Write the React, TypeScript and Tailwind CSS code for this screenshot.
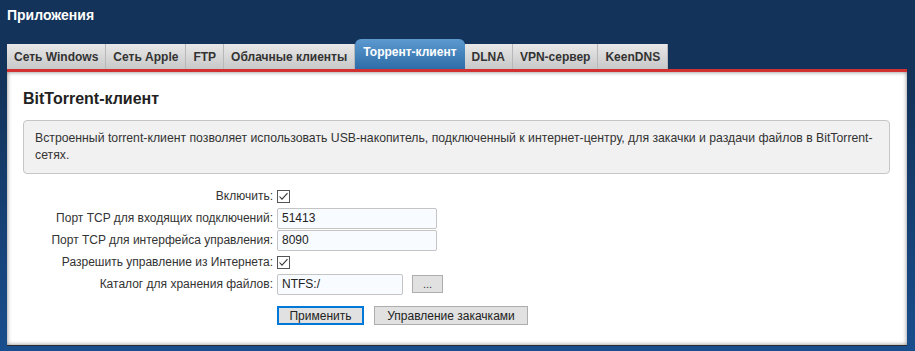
import React from 'react';

const tabs = ['Сеть Windows', 'Сеть Apple', 'FTP', 'Облачные клиенты', 'Торрент-клиент', 'DLNA', 'VPN-сервер', 'KeenDNS'];
const activeTab = 'Торрент-клиент';

const Checkbox: React.FC = () => (
    <svg width="13" height="13" viewBox="0 0 13 13" className="block">
        <rect x="0.5" y="0.5" width="12" height="12" fill="#fff" stroke="#555" />
        <path d="M2.5 6.5 L5 9.2 L10.5 3.2" fill="none" stroke="#333" strokeWidth="1.1" />
    </svg>
);

const TextField: React.FC<{ value: string; width: string }> = ({ value, width }) => (
    <div className={`${width} h-[21px] flex items-center px-[4px] bg-[#f8fbff] border border-[#c4c4c4] rounded-[2px] text-[12px] text-[#222]`}>
        {value}
    </div>
);

const Row: React.FC<{ label: string; children: React.ReactNode }> = ({ label, children }) => (
    <>
        <div className="h-[22px] flex items-center justify-end text-[12px] text-[#333]">{label}</div>
        <div className="h-[22px] flex items-center gap-[9px]">{children}</div>
    </>
);

export default function App() {
    return (
        <div
            className="h-[351px] w-[915px] overflow-hidden bg-[linear-gradient(to_bottom,#13335a_25%,#194e8e_100%)] px-[7px] pt-[7px]"
            style={{ fontFamily: '"Liberation Sans", Arial, sans-serif' }}
        >
            <h1 className="text-[14px] leading-[16px] font-bold text-white">Приложения</h1>

            <div className="mt-[16px] flex items-end h-[30px]">
                {tabs.map((t) =>
                    t === activeTab ? (
                        <div
                            key={t}
                            className="h-[30px] px-[8px] pb-[5px] flex items-center rounded-t-[6px] bg-[linear-gradient(to_bottom,#5c9ad0,#2f6da8)] text-white text-[12px] font-bold"
                        >
                            {t}
                        </div>
                    ) : (
                        <div
                            key={t}
                            className="h-[25px] px-[7px] flex items-center border-r border-[#b8b8b8] bg-[linear-gradient(to_bottom,#e8e8e8,#c8c8c8)] text-[#333] text-[12px] font-bold"
                        >
                            {t}
                        </div>
                    )
                )}
            </div>
            <div className="h-[3px] w-[900px] bg-[#d13131]" />

            <div className="w-[900px] bg-white shadow-[inset_0_0_4px_rgba(0,0,0,0.5)] border-b border-[#2a2a2a] pl-[16px] pr-[17px] pt-[18px] pb-[20px]">
                <h2 className="text-[16px] leading-[18px] font-bold text-[#222]">BitTorrent-клиент</h2>

                <div className="mt-[12px] rounded-[4px] border border-[#c6c6c6] bg-[#f1f1f1] px-[11px] py-[9px] text-[12.25px] leading-[17px] text-[#333] whitespace-nowrap">
                    Встроенный torrent-клиент позволяет использовать USB-накопитель, подключенный к интернет-центру, для закачки и раздачи файлов в BitTorrent-
                    <br />
                    сетях.
                </div>

                <div className="mt-[11px] grid grid-cols-[250px_auto] gap-x-[4px]">
                    <Row label="Включить:">
                        <Checkbox />
                    </Row>
                    <Row label="Порт TCP для входящих подключений:">
                        <TextField value="51413" width="w-[160px]" />
                    </Row>
                    <Row label="Порт TCP для интерфейса управления:">
                        <TextField value="8090" width="w-[160px]" />
                    </Row>
                    <Row label="Разрешить управление из Интернета:">
                        <Checkbox />
                    </Row>
                    <Row label="Каталог для хранения файлов:">
                        <TextField value="NTFS:/" width="w-[126px]" />
                        <button className="h-[18px] w-[31px] bg-[#e1e1e1] border border-[#adadad] text-[11px] leading-none text-[#333]">
                            ...
                        </button>
                    </Row>
                    <div />
                    <div className="mt-[11px] flex items-center gap-[10px]">
                        <button className="h-[19px] w-[87px] bg-[#e1e1e1] border-2 border-[#0078d7] text-[12px] leading-none text-[#222]">
                            Применить
                        </button>
                        <button className="h-[19px] w-[154px] bg-[#e1e1e1] border border-[#adadad] text-[12px] leading-none text-[#222]">
                            Управление закачками
                        </button>
                    </div>
                </div>
            </div>
        </div>
    );
}
